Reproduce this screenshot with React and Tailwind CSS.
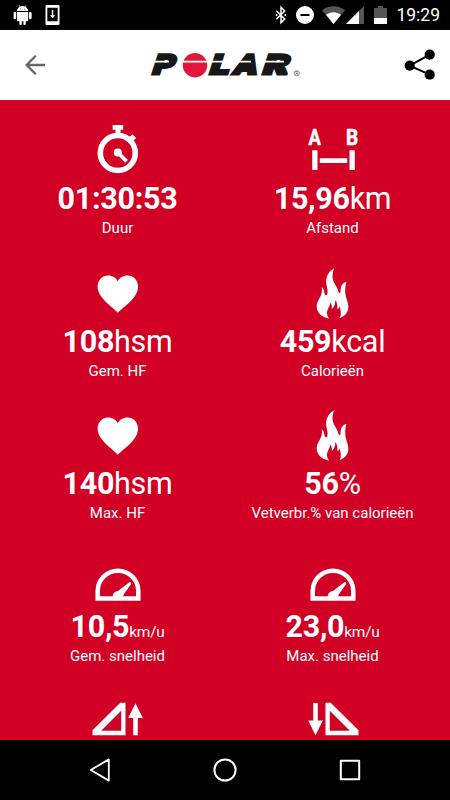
const DurationIcon = () => (
  <svg width="60" height="60" viewBox="0 0 60 60" fill="none" stroke="#fff">
    <circle cx="29.8" cy="33" r="17.5" strokeWidth="5.6" />
    <path d="M24.6 5h10.6v4.8h-2.7v4h-5v-4h-2.9z" fill="#fff" stroke="none" />
    <path d="M41.3 21.1l5-5" strokeWidth="5.2" />
    <path d="M29.8 32.5l8.8 8.8" strokeWidth="3.8" />
    <circle cx="29.8" cy="32.5" r="4" fill="#fff" stroke="none" />
  </svg>
);

const DistanceIcon = () => (
  <svg width="60" height="60" viewBox="0 0 60 60" fill="#fff">
    <g fontFamily="Roboto, sans-serif" fontWeight="700" fontSize="22.5" textAnchor="middle" stroke="#fff" strokeWidth=".6">
      <text transform="translate(11.8 25) scale(.82 1)">A</text>
      <text transform="translate(49 25) scale(.85 1)">B</text>
    </g>
    <path d="M9.2 30.3h5.3V50H9.2zM46.5 30.3h5.3V50h-5.3zM16.8 38.3h27.4V43H16.8z" />
  </svg>
);

const HeartIcon = () => (
  <svg width="60" height="60" viewBox="0 0 60 60" fill="#fff">
    <path d="M29.8 49.8C26.5 46 18.5 40.5 14 34.5C11 30.5 9.6 27.5 9.6 23.5C9.6 17 14.5 12.5 20.1 12.5C24.5 12.5 28.1 14.7 29.8 18.2C31.5 14.7 35.1 12.5 39.5 12.5C45.3 12.5 50 17 50 23.5C50 27.5 48.8 30.5 45.8 34.5C41.3 40.5 33.3 46 29.8 49.8z" />
  </svg>
);

const FlameIcon = () => (
  <svg width="60" height="60" viewBox="0 0 60 60" fill="#fff">
    <path d="M31.2 5.3C26 8 22.8 13.5 23.2 19.5C23.5 24 25.5 27.5 24.2 31.5C23.6 32.8 22.7 32.5 22 31.5C20.8 29.8 21.8 26.5 18.8 24C19.5 30 18 32.8 15.5 37C13.6 40.3 13.2 43.5 14.3 47C15.7 51.2 20 54.5 26 55.4C24.2 53 23.7 51 24.1 48.6C24.8 45.3 27 43 27.4 39.5C28.6 41 29 43 28.8 46C31 44.5 32.5 41 32.3 37C34.3 39.5 34.6 42.5 34.2 46C35.5 46.3 36 45 36.2 43C38 47.5 38.7 51.5 36.6 55.1C41.5 53.5 44.3 50 45.2 46C46 41.5 44 37.5 42.9 33.5C41.8 29 42 23.5 43.4 18.8C39.8 20 37.6 23 37.6 27C37.6 29 37.3 30.2 36.6 30.3C35.5 30.3 35.3 27.5 34 24.8C32.3 21.3 30.2 19 29.7 15.5C29.2 12 29.8 8.5 31.2 5.3z" />
  </svg>
);

const SpeedIcon = () => (
  <svg width="60" height="60" viewBox="0 0 60 60" fill="none" stroke="#fff">
    <path d="M9.7 50.5V43a20.3 20.3 0 0 1 40.6 0v7.5z" strokeWidth="4.5" />
    <path d="M24.8 49.5a5.4 5.4 0 0 1 5.2-6.5L41 34.4a1.4 1.4 0 0 1 2 1.9L35.3 47v2.5z" fill="#fff" stroke="none" />
  </svg>
);

const AscentIcon = () => (
  <svg width="60" height="60" viewBox="0 0 60 60" fill="#fff">
    <path fillRule="evenodd" d="M4.5 45.3v-5L32.3 12.7h5.2v32.6zM13.2 40.7h20v-20z" />
    <path d="M47.5 13.2L54.8 28h-5v17.3h-4.6V28h-5z" />
  </svg>
);

const DescentIcon = () => (
  <svg width="60" height="60" viewBox="0 0 60 60" fill="#fff">
    <path fillRule="evenodd" d="M55.5 45.3v-5L27.7 12.7h-5.2v32.6zM46.8 40.7h-20v-20z" />
    <path d="M12.5 45.3L5.2 30.5h5V13h4.6v17.5h5z" />
  </svg>
);

const stats = [
  { icon: DurationIcon, value: '01:30:53', label: 'Duur' },
  { icon: DistanceIcon, value: '15,96', unit: 'km', label: 'Afstand' },
  { icon: HeartIcon, value: '108', unit: 'hsm', label: 'Gem. HF' },
  { icon: FlameIcon, value: '459', unit: 'kcal', label: 'Calorieën' },
  { icon: HeartIcon, value: '140', unit: 'hsm', label: 'Max. HF' },
  { icon: FlameIcon, value: '56', unit: '%', label: 'Vetverbr.% van calorieën' },
  { icon: SpeedIcon, value: '10,5', unit: 'km/u', label: 'Gem. snelheid', small: true },
  { icon: SpeedIcon, value: '23,0', unit: 'km/u', label: 'Max. snelheid', small: true },
  { icon: AscentIcon },
  { icon: DescentIcon },
];

const Stat = ({ icon: Icon, value, unit, label, small }) => (
  <div className="flex h-[142.5px] flex-col items-center">
    <Icon />
    {value && (
      <>
        <p className="h-9 text-[30.5px] leading-[37px] tracking-[-0.3px] whitespace-nowrap">
          <span className="font-bold">{value}</span>
          {unit && <span className={small ? 'text-[15.5px]' : 'font-normal'}>{unit}</span>}
        </p>
        <p className="text-[15px] leading-6 whitespace-nowrap">{label}</p>
      </>
    )}
  </div>
);

const StatusBar = () => (
  <div className="flex h-[30px] items-center bg-black pr-[10px] pl-[13px] text-white">
    <svg width="19" height="20" viewBox="0 0 19 20" fill="#fff">
      <path d="M4 6.1C4.2 3.8 5.2 2.5 6.7 1.7L5.8.3 6.3 0l1 1.4a6 6 0 0 1 4.6 0l1-1.4.5.3-.9 1.4c1.5.8 2.5 2.1 2.7 4.4zM4 7h11.2v8.2a1 1 0 0 1-1 1h-1.4V19a1.2 1.2 0 0 1-2.4 0v-2.8H8.8V19a1.2 1.2 0 0 1-2.4 0v-2.8H5a1 1 0 0 1-1-1z" />
      <rect x=".6" y="7" width="2.6" height="7.2" rx="1.3" />
      <rect x="16" y="7" width="2.6" height="7.2" rx="1.3" />
      <path d="M7 4h.8M11.4 4h.8" stroke="#000" strokeWidth=".8" />
    </svg>
    <svg className="ml-[13px]" width="15" height="20" viewBox="0 0 15 20" fill="none" stroke="#fff">
      <path fill="#fff" stroke="none" fillRule="evenodd" d="M1.3 0h12.4l.8.8v18.4l-.8.8H1.3l-.8-.8V.8zM2.3 2.7v13.6h10.4V2.7z" />
      <path d="M7.5 5v7" strokeWidth="1.4" />
      <path d="M4.8 10.3h5.4l-2.7 3z" fill="#fff" stroke="none" />
    </svg>
    <svg className="ml-auto" width="12" height="20" viewBox="0 0 12 20" fill="none" stroke="#fff" strokeWidth="1.5">
      <path d="M1.3 5.7l8.4 8.3L6 17.7V2.3L9.7 6 1.3 14.3" />
      <path d="M.8 9h1.6v2H.8zM9.5 9h1.6v2H9.5z" fill="#fff" stroke="none" />
    </svg>
    <svg className="ml-[9px]" width="18" height="18" viewBox="0 0 18 18">
      <circle cx="9" cy="9" r="9" fill="#fff" />
      <path d="M4.5 9h9" stroke="#000" strokeWidth="2" />
    </svg>
    <svg className="ml-[8px]" width="23" height="18" viewBox="0 0 23 18">
      <path d="M0 4.2C6.5-1.2 16.5-1.2 23 4.2L11.5 18z" fill="#555" />
      <path d="M4 8.8c4.3-3.4 10.7-3.4 15 0L11.5 18z" fill="#fff" />
    </svg>
    <svg className="ml-[1px]" width="18" height="18" viewBox="0 0 18 18">
      <path d="M18 0v18H0z" fill="#555" />
      <path d="M13 5v13H0z" fill="#fff" />
    </svg>
    <svg className="ml-[10px]" width="13" height="18" viewBox="0 0 13 18">
      <path d="M4 0h5v2h4v10H0V2h4z" fill="#555" />
      <path d="M0 12h13v6H0z" fill="#fff" />
    </svg>
    <span className="ml-[9px] text-[17.5px] leading-[31px]">19:29</span>
  </div>
);

const Logo = () => (
  <svg width="170" height="50" viewBox="0 0 170 50">
    <g fill="#171717" stroke="#171717" strokeWidth="3" fontFamily="Roboto, sans-serif" fontWeight="900" fontSize="27">
      <text transform="translate(11.2 34.3) skewX(-18) scale(1.2 1)">P</text>
      <text transform="translate(68.5 34.3) skewX(-18) scale(1.28 1)">L</text>
      <text transform="translate(92.5 34.3) skewX(-18) scale(1.22 1)">A</text>
      <text transform="translate(121.5 34.3) skewX(-18) scale(1.42 1)">R</text>
    </g>
    <circle cx="55" cy="25.2" r="12.2" fill="#e2153b" />
    {/* the slit that runs through the wordmark */}
    <path d="M12 21.6h17M41 21.6h43M98 21.6h13M124 21.6h20" stroke="#fff" strokeWidth="1.8" />
    <circle cx="156.7" cy="33.3" r="2.6" fill="none" stroke="#666" strokeWidth=".7" />
    <text x="156.7" y="35" fontFamily="Roboto, sans-serif" fontSize="4.5" textAnchor="middle" fill="#444">R</text>
  </svg>
);

const Header = () => (
  <header className="flex h-[70px] items-center justify-between bg-white px-[14px]">
    <svg width="32" height="32" viewBox="0 0 32 32" fill="none" stroke="#666" strokeWidth="2.3">
      <path d="M31 16H12.8M21.8 6.8L12.6 16l9.2 9.2" />
    </svg>
    <Logo />
    <svg width="32" height="32" viewBox="0 0 32 32">
      <path d="M25.7 5.7l-20 11 20 9" fill="none" stroke="#000" strokeWidth="2" />
      <circle cx="25.7" cy="5.7" r="5.1" />
      <circle cx="5.7" cy="16.7" r="5.1" />
      <circle cx="25.7" cy="25.7" r="5.1" />
    </svg>
  </header>
);

const NavBar = () => (
  <nav className="flex h-[60px] items-center justify-between bg-black px-[88px]">
    <svg width="24" height="24" viewBox="0 0 24 24" fill="none" stroke="#fff" strokeWidth="1.8" strokeLinejoin="round">
      <path d="M2.8 12L20.8 1.4v21.2z" />
    </svg>
    <svg width="24" height="24" viewBox="0 0 24 24" fill="none" stroke="#fff" strokeWidth="2">
      <circle cx="12" cy="12" r="10.6" />
    </svg>
    <svg width="24" height="24" viewBox="0 0 24 24" fill="none" stroke="#fff" strokeWidth="2" strokeLinejoin="round">
      <path d="M2.8 2.8h18.4v18.4H2.8z" />
    </svg>
  </nav>
);

const App = () => (
  <div className="flex h-[800px] w-[450px] flex-col overflow-hidden font-[Roboto,sans-serif]">
    <StatusBar />
    <Header />
    <main className="grid h-[640px] grid-cols-2 content-start overflow-hidden bg-[#d10024] px-[10px] pt-5 text-white">
      {stats.map((stat, i) => (
        <Stat key={i} {...stat} />
      ))}
    </main>
    <NavBar />
  </div>
);

export default App;
